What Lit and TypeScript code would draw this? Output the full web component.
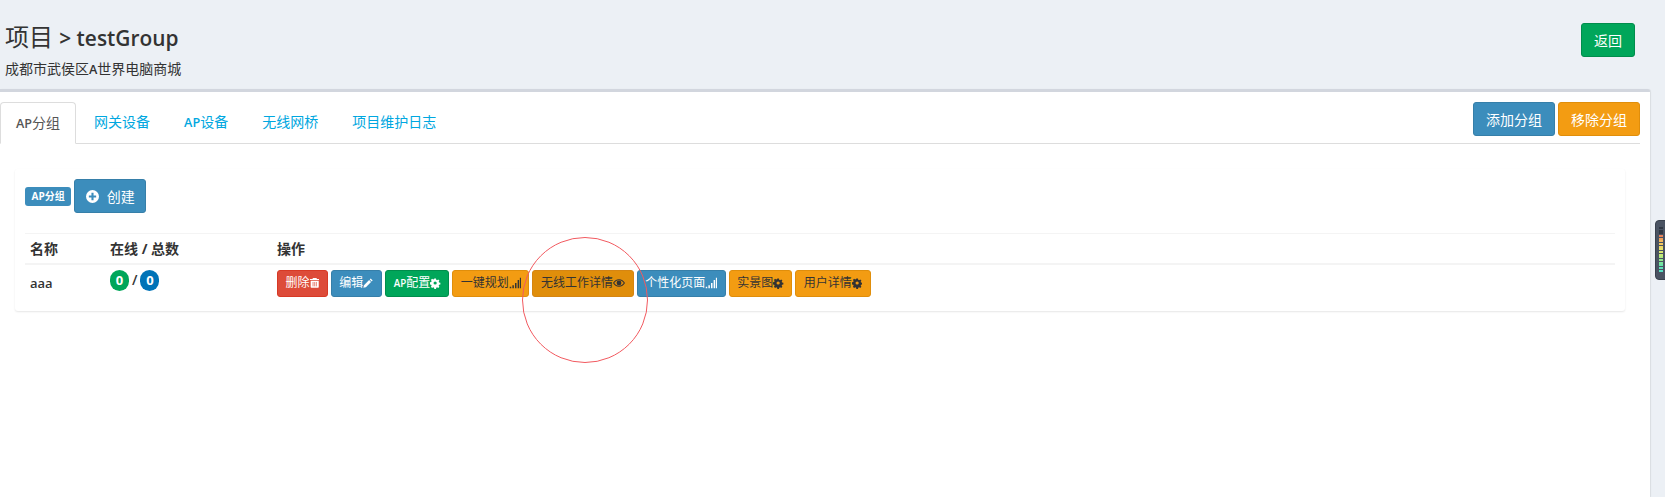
import { LitElement, html, css } from "lit";
import { customElement } from "lit/decorators.js";

const gear = html`<svg class="ic w10" viewBox="0 0 16 16"><path fill="currentColor" fill-rule="evenodd" d="M6.7 1h2.6l.4 2 1.3.6 1.8-1.1 1.8 1.8-1.1 1.8.6 1.3 2 .4v2.6l-2 .4-.6 1.3 1.1 1.8-1.8 1.8-1.8-1.1-1.3.6-.4 2H6.7l-.4-2-1.3-.6-1.8 1.1-1.8-1.8 1.1-1.8-.6-1.3-2-.4V6.7l2-.4.6-1.3-1.1-1.8 1.8-1.8 1.8 1.1 1.3-.6zM8 5.5a2.5 2.5 0 1 0 0 5 2.5 2.5 0 0 0 0-5z"/></svg>`;
const trash = html`<svg class="ic w9" viewBox="1 1 14 15"><path fill="currentColor" d="M5.5 1h5l1 1.500H15V4H1V2.500h3.500zM2 5h12v9.500a1 1 0 0 1-1 1H3a1 1 0 0 1-1-1z"/><path stroke="#dd4b39" d="M5.500 7v6.500M8 7v6.500M10.500 7v6.500"/></svg>`;
const pencil = html`<svg class="ic w10" viewBox="0 0 16 16"><path fill="currentColor" d="M12 1l3 3-1.500 1.500-3-3zM9.500 3.500l3 3-8 8-4 1 1-4z"/></svg>`;
const signal = html`<svg class="ic" viewBox="0 0 16 16"><path fill="currentColor" d="M1 13h2v2H1zM4.500 11h2v4h-2zM8 8h2v7H8zM11.500 4h2v11h-2zM14.500 1h1.500v14h-1.500z"/></svg>`;
const eye = html`<svg class="ic" viewBox="0 0 16 16"><path fill="currentColor" fill-rule="evenodd" d="M8 3c3.500 0 6.300 2.200 8 5-1.700 2.800-4.500 5-8 5S1.700 10.800 0 8c1.700-2.800 4.500-5 8-5zM1.600 8C3 10 5.300 11.800 8 11.800S13 10 14.400 8C13 6 10.700 4.200 8 4.200S3 6 1.600 8z"/><circle fill="currentColor" cx="8" cy="8" r="3.200"/></svg>`;

const la = (t: string) => html`<span class="la">${t}</span>`;

interface Act { label: unknown; kind: string; icon: unknown }
const actions: Act[] = [
  { label: "删除", kind: "red", icon: trash },
  { label: "编辑", kind: "blue", icon: pencil },
  { label: html`${la("AP")}配置`, kind: "green", icon: gear },
  { label: "一键规划", kind: "amber", icon: signal },
  { label: "无线工作详情", kind: "amber hover", icon: eye },
  { label: "个性化页面", kind: "blue", icon: signal },
  { label: "实景图", kind: "amber", icon: gear },
  { label: "用户详情", kind: "amber", icon: gear },
];

const meter = ["#2f3743", "#2f3743", "#2f3743", "#e8825a", "#f0a05a", "#f2b75e", "#f2c860", "#efd765", "#e8e36b", "#dbe870", "#c6eb78", "#aeea80", "#93e88c", "#7be69a", "#6ae4aa", "#5fe2ba", "#57e0c4"];

@customElement("app-root")
export class AppRoot extends LitElement {
  static styles = css`
    :host {
      display: block;
      width: 1665px;
      height: 497px;
      overflow: hidden;
      position: relative;
      background: #ecf0f5;
      font-family: "Open Sans", "Noto Sans CJK SC", sans-serif;
      color: #333;
      font-size: 14px;
    }
    .la { font-size: 0.9em; font-weight: 600; }
    .head {
      height: 89px;
      box-sizing: border-box;
      padding: 19px 30px 0 5px;
      display: flex;
      justify-content: space-between;
      align-items: flex-start;
    }
    h1 {
      margin: 0;
      font-size: 24px;
      line-height: 36px;
      font-weight: 400;
      color: #333;
    }
    h1 .la { font-size: 0.87em; }
    .sub {
      font-size: 14px;
      line-height: 18px;
      margin-top: 4px;
      color: #333;
    }
    .btn {
      display: inline-flex;
      align-items: center;
      justify-content: center;
      box-sizing: border-box;
      border: 1px solid;
      border-radius: 3px;
      color: #fff;
      font-size: 14px;
      height: 34px;
      white-space: nowrap;
    }
    .green { background: #00a65a; border-color: #008d4c; }
    .blue { background: #3c8dbc; border-color: #367fa9; }
    .amber { background: #f39c12; border-color: #e08e0b; }
    .red { background: #dd4b39; border-color: #d73925; }
    .back { width: 54px; margin-top: 4px; }
    .panel {
      background: #fff;
      width: 1650px;
      height: 408px;
      box-sizing: border-box;
      border-top: 3px solid #d2d6de;
      border-top-right-radius: 3px;
      box-shadow: 1px 0 1px rgba(0, 0, 0, 0.08);
    }
    .tabs {
      margin-top: 10px;
      height: 42px;
      width: 1640px;
      box-sizing: border-box;
      border-bottom: 1px solid #ddd;
      display: flex;
    }
    .tab {
      box-sizing: border-box;
      height: 42px;
      line-height: 40px;
      padding: 0 15px;
      font-size: 14px;
      color: #00a7e0;
      margin-right: 4px;
    }
    .tab.on {
      color: #555;
      background: #fff;
      border: 1px solid #ddd;
      border-bottom-color: #fff;
      border-radius: 4px 4px 0 0;
      margin-right: 3px;
    }
    .tools {
      margin-left: auto;
      display: flex;
      gap: 3px;
      height: 34px;
    }
    .tools .btn { width: 82px; }
    .box {
      margin: 25px 0 0 15px;
      width: 1610px;
      height: 142px;
      box-sizing: border-box;
      padding: 10px;
      background: #fff;
      border-radius: 3px;
      box-shadow: 0 1px 2px rgba(0, 0, 0, 0.1);
    }
    .bar { display: flex; align-items: center; height: 34px; gap: 3px; }
    .tag {
      background: #3c8dbc;
      color: #fff;
      font-size: 10px;
      font-weight: 700;
      line-height: 19px;
      height: 19px;
      padding: 0 6.5px;
      border-radius: 3px;
    }
    .tag .la { font-weight: 700; font-size: 1em; }
    .create { width: 72px; gap: 8px; }
    .create svg { width: 13px; height: 13px; }
    table {
      border-collapse: collapse;
      width: 100%;
      margin-top: 20px;
      font-size: 14px;
      table-layout: fixed;
    }
    th, td { padding: 0 0 0 5px; text-align: left; }
    th {
      height: 30px;
      box-sizing: border-box;
      padding-top: 2px;
      border-top: 1px solid #f4f4f4;
      border-bottom: 2px solid #f4f4f4;
      font-weight: 700;
      line-height: 20px;
      color: #333;
    }
    td {
      height: 46px;
      vertical-align: top;
      padding-top: 5px;
      box-sizing: border-box;
    }
    .name { padding-top: 8px; }
    .name .la { font-size: 13px; }
    .count { padding-top: 5px; }
    .badge {
      display: inline-block;
      width: 19px;
      height: 21px;
      line-height: 21px;
      border-radius: 10px;
      text-align: center;
      font-size: 13px;
      font-weight: 700;
      color: #fff;
    }
    .bg { background: #00a65a; }
    .bb { background: #0073b7; }
    .sep { margin: 0 3px; font-weight: 600; }
    .acts { display: flex; gap: 3px; }
    .acts .btn {
      height: 27px;
      font-size: 12px;
      padding: 0 7.6px;
      line-height: 18px;
    }
    .acts .la { font-size: 0.82em; }
    .acts .amber { color: #333; }
    .acts .hover { background: #e08e0b; border-color: #d58512; }
    .ic { width: 12px; height: 12px; flex: none; }
    .ic.w10 { width: 10.3px; }
    .ic.w9 { width: 9.4px; }
    .circle {
      position: absolute;
      left: 522px;
      top: 237px;
      width: 126px;
      height: 126px;
      box-sizing: border-box;
      border: 1px solid #f25a60;
      border-radius: 50%;
      pointer-events: none;
    }
    .meter {
      position: absolute;
      left: 1655px;
      top: 220px;
      width: 14px;
      height: 60px;
      box-sizing: border-box;
      padding: 6px 0 0 3px;
      background: #4a5362;
      border: 1px solid #39414d;
      border-radius: 4px;
      display: flex;
      flex-direction: column;
      gap: 0.67px;
    }
    .meter i { display: block; width: 4px; height: 2px; flex: none; }
  `;

  render() {
    return html`
      <div class="head">
        <div>
          <h1>项目 <span class="la">&gt; testGroup</span></h1>
          <div class="sub">成都市武侯区${la("A")}世界电脑商城</div>
        </div>
        <span class="btn green back">返回</span>
      </div>
      <div class="panel">
        <div class="tabs">
          <span class="tab on">${la("AP")}分组</span>
          <span class="tab">网关设备</span>
          <span class="tab">${la("AP")}设备</span>
          <span class="tab">无线网桥</span>
          <span class="tab">项目维护日志</span>
          <div class="tools">
            <span class="btn blue">添加分组</span>
            <span class="btn amber">移除分组</span>
          </div>
        </div>
        <div class="box">
          <div class="bar">
            <span class="tag">${la("AP")}分组</span>
            <span class="btn blue create">
              <svg viewBox="0 0 16 16"><path fill="currentColor" fill-rule="evenodd" d="M8 0a8 8 0 1 1 0 16A8 8 0 0 1 8 0zM6.700 3.500v3.200H3.500v2.600h3.200v3.200h2.600V9.300h3.200V6.700H9.300V3.500z"/></svg>
              创建
            </span>
          </div>
          <table>
            <colgroup><col style="width:80px" /><col style="width:167px" /><col /></colgroup>
            <thead><tr><th>名称</th><th>在线 / 总数</th><th>操作</th></tr></thead>
            <tbody>
              <tr>
                <td class="name"><span class="la">aaa</span></td>
                <td class="count"><span class="badge bg">0</span><span class="sep">/</span><span class="badge bb">0</span></td>
                <td><div class="acts">${actions.map(
                  (a) => html`<span class="btn ${a.kind}">${a.label}${a.icon}</span>`
                )}</div></td>
              </tr>
            </tbody>
          </table>
        </div>
      </div>
      <div class="circle"></div>
      <div class="meter">${meter.map((c) => html`<i style="background:${c}"></i>`)}</div>
    `;
  }
}
